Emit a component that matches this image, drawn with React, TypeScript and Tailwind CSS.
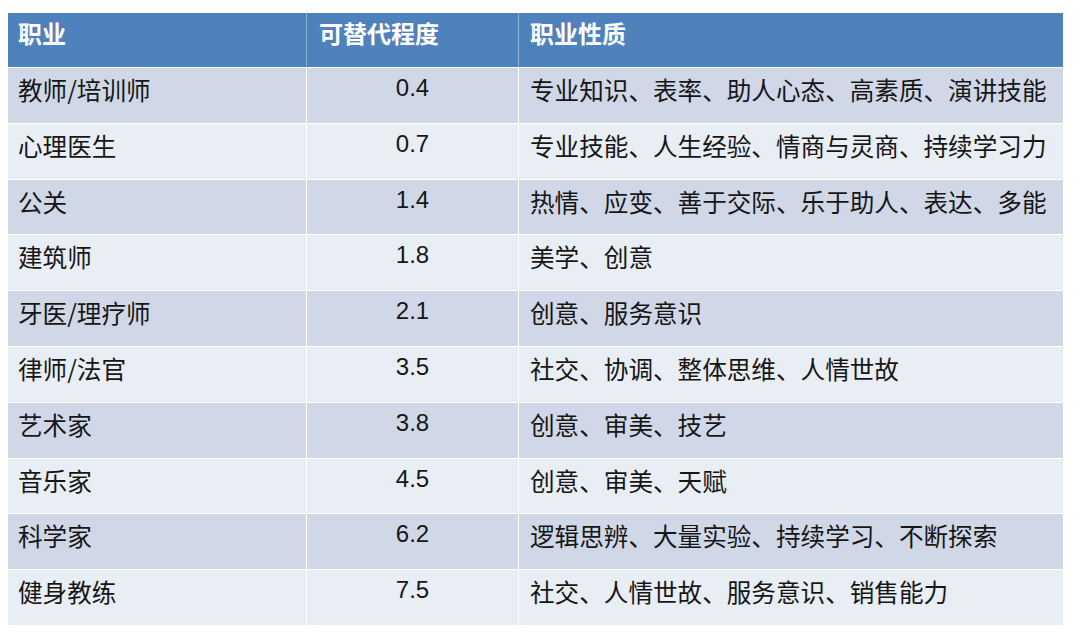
const rows: [string, string, string][] = [
  ["教师/培训师", "0.4", "专业知识、表率、助人心态、高素质、演讲技能"],
  ["心理医生", "0.7", "专业技能、人生经验、情商与灵商、持续学习力"],
  ["公关", "1.4", "热情、应变、善于交际、乐于助人、表达、多能"],
  ["建筑师", "1.8", "美学、创意"],
  ["牙医/理疗师", "2.1", "创意、服务意识"],
  ["律师/法官", "3.5", "社交、协调、整体思维、人情世故"],
  ["艺术家", "3.8", "创意、审美、技艺"],
  ["音乐家", "4.5", "创意、审美、天赋"],
  ["科学家", "6.2", "逻辑思辨、大量实验、持续学习、不断探索"],
  ["健身教练", "7.5", "社交、人情世故、服务意识、销售能力"],
];

const cjk = "font-['Noto_Sans_CJK_SC',sans-serif]";

export default function App() {
  return (
    <div className="w-[1080px] h-[639px] bg-white pt-[13px] pl-[8px]">
      <div className="w-[1055px]">
        <div className={`grid grid-cols-[298px_212px_545px] h-[54px] bg-[#4f81bd] text-white font-bold text-[24px] leading-[24px] ${cjk}`}>
          <div className="pl-[10px] pt-[8px]">职业</div>
          <div className="pl-[12px] pt-[8px] border-l border-[#8fb0d8]">可替代程度</div>
          <div className="pl-[11px] pt-[8px] border-l border-[#8fb0d8]">职业性质</div>
        </div>
        {rows.map(([job, score, traits], i) => (
          <div
            key={job}
            className={`grid grid-cols-[298px_212px_545px] h-[55.8px] border-t border-white text-[24.6px] leading-[24px] text-[#161616] ${
              i % 2 === 0 ? "bg-[#d0d8e8]" : "bg-[#e9edf4]"
            }`}
          >
            <div className={`pl-[10px] pt-[9px] ${cjk}`}>{job}</div>
            <div className="pt-[8px] text-center border-l border-white font-['Liberation_Sans',sans-serif] text-[24px]">
              {score}
            </div>
            <div className={`pl-[11px] pt-[9px] border-l border-white whitespace-nowrap ${cjk}`}>{traits}</div>
          </div>
        ))}
      </div>
    </div>
  );
}
